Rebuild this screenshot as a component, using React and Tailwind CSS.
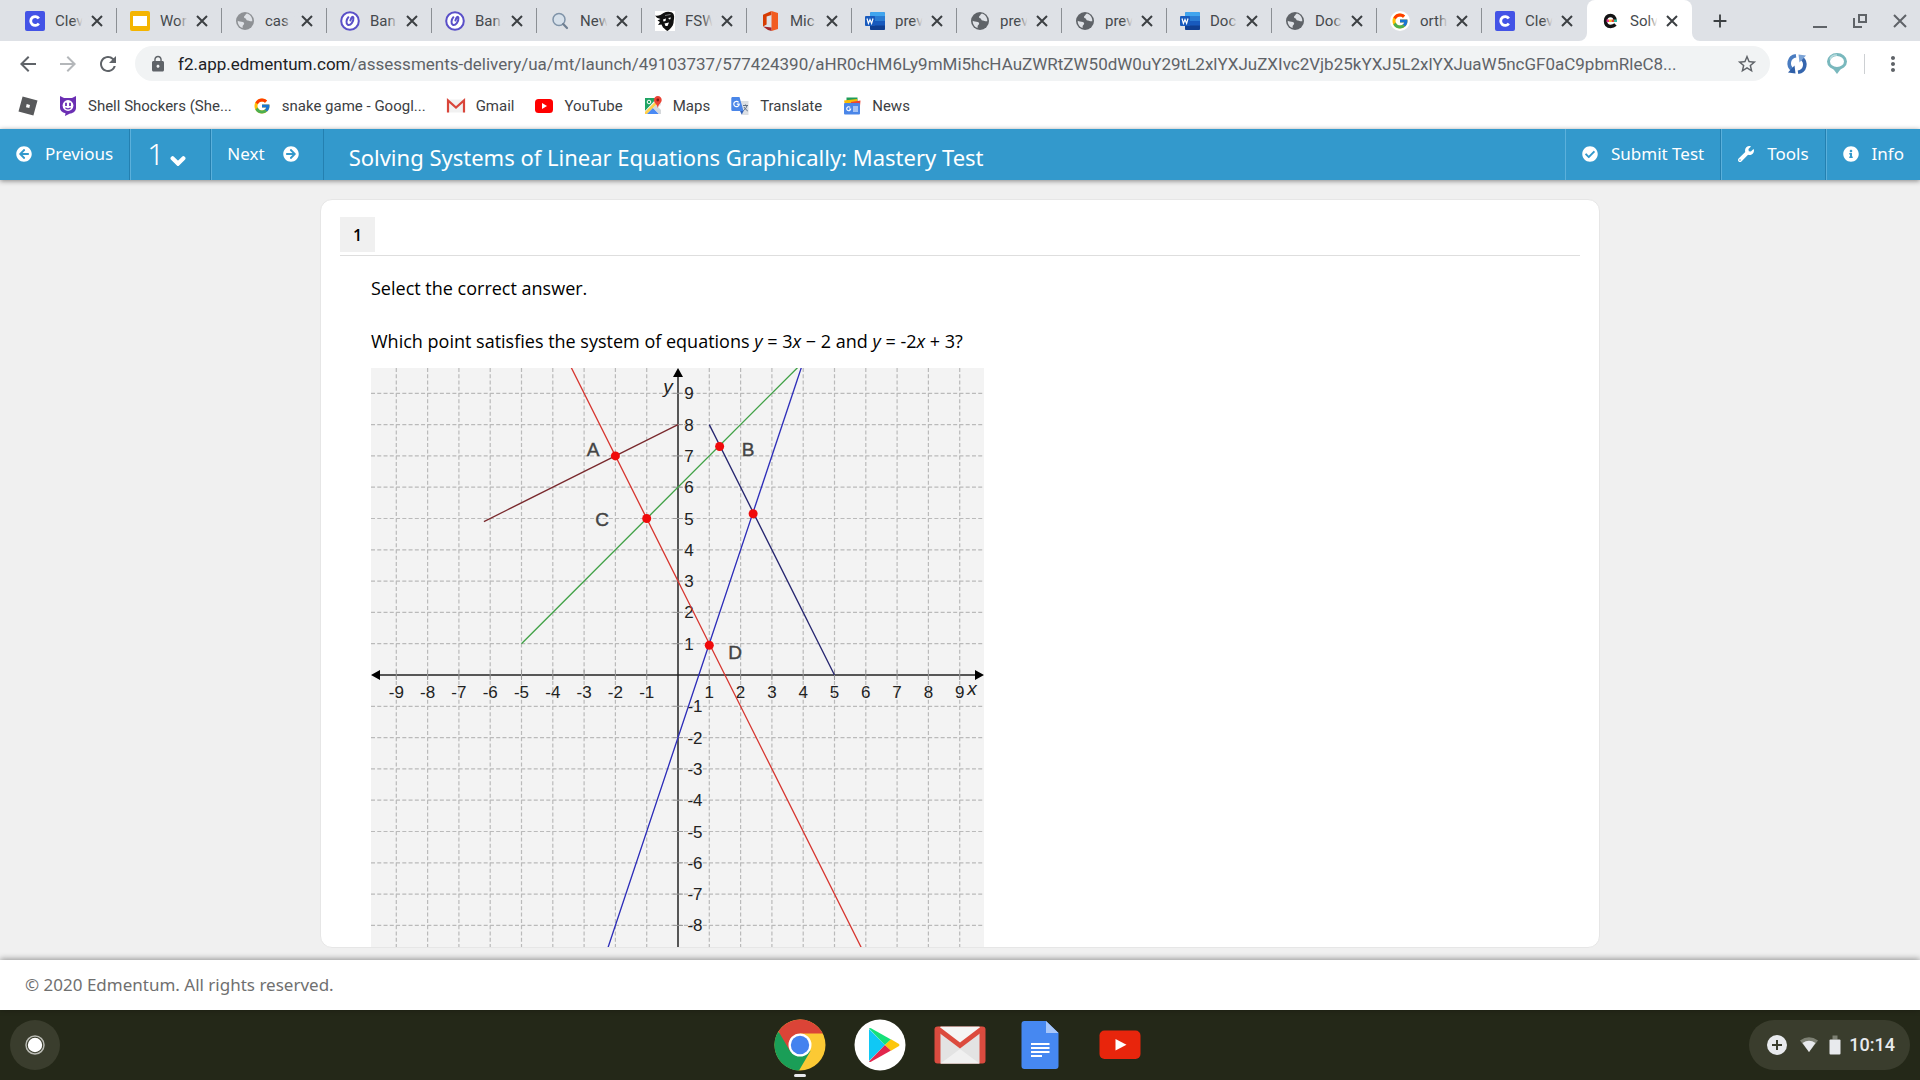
import {
    FaArrowCircleLeft,
    FaArrowCircleRight,
    FaCheckCircle,
    FaChevronDown,
    FaInfoCircle,
    FaWrench,
} from 'react-icons/fa';
import { FcGoogle } from 'react-icons/fc';
import {
    MdAdd,
    MdArrowBack,
    MdArrowForward,
    MdLock,
    MdMoreVert,
    MdRefresh,
    MdStarBorder,
} from 'react-icons/md';

// ==========================================
// Favicons
// ==========================================

function CleverIcon() {
    return (
        <svg viewBox="0 0 20 20" className="w-5 h-5">
            <rect width="20" height="20" rx="2" fill="#4353e6" />
            <path d="M13.8 7.6A4.4 4.4 0 1 0 13.8 12.4" fill="none" stroke="#fff" strokeWidth="2.8" />
        </svg>
    );
}

function SlidesIcon() {
    return (
        <svg viewBox="0 0 20 20" className="w-5 h-5">
            <rect width="20" height="20" rx="2" fill="#f4b400" />
            <rect x="3" y="5" width="14" height="10" fill="#fff" />
        </svg>
    );
}

function GlobeIcon({ light }) {
    return (
        <svg viewBox="0 0 20 20" className={light ? 'w-5 h-5 text-[#8e9195]' : 'w-5 h-5 text-[#5f6368]'}>
            <circle cx="10" cy="10" r="9" fill="currentColor" />
            <path
                d="M12 2.6C10.5 3 10.8 4.2 9.5 5C8.3 5.8 9.2 7 10.2 7.2C11.5 7.6 11 9.5 12.8 9.4C14.5 9.3 15 10.8 17.3 10.2C17.5 6.5 15 3.3 12 2.6ZM2.7 9.8C3.8 11 6 10.4 7.8 11C9.5 11.6 9.6 13.2 8.3 14C7.2 14.8 7.8 16 7.6 17C4.6 16 2.6 13.2 2.7 9.8Z"
                fill="#dee1e6"
            />
        </svg>
    );
}

function BannerIcon() {
    return (
        <svg viewBox="0 0 20 20" className="w-5 h-5" fill="none" stroke="#5a50c8" strokeLinecap="round">
            <circle cx="10" cy="10" r="8.8" fill="#fff" strokeWidth="2" />
            <path d="M8.4 6.2C6.4 8.5 5.6 12.6 7.8 13.8C10.6 14.8 13.8 10.4 13.4 6.8C13 4.6 11.4 6 10.4 9.6" strokeWidth="2" />
        </svg>
    );
}

function MagnifierIcon() {
    return (
        <svg viewBox="0 0 20 20" className="w-5 h-5" fill="none">
            <circle cx="9" cy="8.5" r="6" stroke="#7f93a8" strokeWidth="1.5" fill="#d6e0ea" />
            <path d="M13.2 13L17 17" stroke="#6f7f92" strokeWidth="2.2" strokeLinecap="round" />
        </svg>
    );
}

function PirateIcon() {
    return (
        <svg viewBox="0 0 20 20" className="w-5 h-5">
            <rect width="20" height="20" fill="#fff" />
            <path
                d="M0 4.5C3 5.5 6 4 8.5 2C12 0 17 .5 18.5 3C20 6 18.5 9 18.5 12C18 15.5 15 18 12.5 20C10.5 19 9.5 17.5 8 16.5L6.5 13.5L3 14L5 11L2.5 9.5L5.5 8L2 6.8Z"
                fill="#111"
            />
            <path d="M8 8.5L11 7.5L10.5 10L8.5 10.5ZM13 7L16 6.5L15 8.8ZM9.5 12.5L14 11.5L12.5 15L10.5 15Z" fill="#fff" />
            <path d="M10 4.5L15.5 3.5" stroke="#999" strokeWidth="0.8" />
        </svg>
    );
}

function OfficeIcon() {
    return (
        <svg viewBox="0 0 20 20" className="w-5 h-5">
            <path d="M11.5 0L3 3.8V15.5L6.6 13.6V5.6L11.5 4Z" fill="#d73b02" />
            <path d="M11.5 0L18 2V18L11.5 20Z" fill="#f25c1f" />
            <path d="M3 15.5L11.5 16.6V20L8 19Z" fill="#a4262c" />
        </svg>
    );
}

function WordIcon() {
    return (
        <svg viewBox="0 0 20 20" className="w-5 h-5">
            <rect x="5" y="1" width="15" height="18" rx="1.5" fill="#185abd" />
            <path d="M5 5.5V2.5A1.5 1.5 0 0 1 6.5 1H18.5A1.5 1.5 0 0 1 20 2.5V5.5Z" fill="#41a5ee" />
            <path d="M5 5.5H20V10H5Z" fill="#2b7cd3" />
            <path d="M5 14.5H20V17.5A1.5 1.5 0 0 1 18.5 19H6.5A1.5 1.5 0 0 1 5 17.5Z" fill="#103f91" />
            <rect y="5" width="10" height="10" rx="1" fill="#185abd" />
            <path d="M2 7.5L3.4 12.5L5 8.5L6.6 12.5L8 7.5" fill="none" stroke="#fff" strokeWidth="1.2" />
        </svg>
    );
}

function GoogleIcon({ round }) {
    return (
        <span className={round ? 'flex w-5 h-5 items-center justify-center rounded-full bg-white' : 'flex w-5 h-5 items-center justify-center'}>
            <FcGoogle className="w-[18px] h-[18px]" />
        </span>
    );
}

function EdmentumIcon() {
    return (
        <svg viewBox="0 0 20 20" className="w-5 h-5" fill="none">
            <path d="M15 9.5C15 5.8 13 4.5 10.5 4.5C7.5 4.5 5.5 6.6 5.5 10C5.5 13.5 7.5 15.5 10.6 15.5C12.5 15.5 14 15 15.5 13.6" stroke="#141414" strokeWidth="3.4" />
            <path d="M6.5 8.5H9V11H6.5Z" fill="#e5308c" />
            <path d="M9 8.5H11.5V11H9Z" fill="#f5c518" />
            <path d="M11.5 8.5H14V11H11.5Z" fill="#e2442f" />
            <path d="M14 8.5H17V11H14Z" fill="#2fb7a3" />
        </svg>
    );
}

function RobloxIcon() {
    return (
        <svg viewBox="0 0 20 20" className="w-5 h-5">
            <path d="M4.6 .5L19.5 4.5L15.4 19.5L.5 15.5ZM8.7 8L8 11.2L11.3 12L12 8.9Z" fill="#58595b" fillRule="evenodd" />
        </svg>
    );
}

function ShellIcon() {
    return (
        <svg viewBox="0 0 20 20" className="w-5 h-5">
            <path d="M2 0L6 2H14L18 0V12C18 15 15 17.5 12 17.5L7 20L7.5 17.2C4 16.5 2 14.5 2 12Z" fill="#6b2fb3" />
            <circle cx="10" cy="9.5" r="5.4" fill="#fff" />
            <path d="M8 6.8V10M12 6.8V10" stroke="#6b2fb3" strokeWidth="1.8" />
            <path d="M7.4 11.8Q10 14 12.6 11.8" stroke="#6b2fb3" strokeWidth="1.2" fill="none" />
        </svg>
    );
}

function GmailIcon() {
    return (
        <svg viewBox="0 0 20 20" className="w-5 h-5">
            <path d="M1 3.5H19V16.5H1Z" fill="#f1f1f1" />
            <path d="M2 16.5V4.5L10 11.5L18 4.5V16.5" fill="none" stroke="#d9453a" strokeWidth="2.2" />
        </svg>
    );
}

function YouTubeIcon() {
    return (
        <svg viewBox="0 0 20 20" className="w-5 h-5">
            <rect x="1" y="3" width="18" height="14" rx="3.5" fill="#f00" />
            <path d="M8 7L13 10L8 13Z" fill="#fff" />
        </svg>
    );
}

function MapsIcon() {
    return (
        <svg viewBox="0 0 20 20" className="w-5 h-5">
            <path d="M2 2H14L2 15Z" fill="#1fa463" />
            <path d="M2 15L14 3L18 7V9L7 18H2Z" fill="#e8e8e8" />
            <path d="M2 16L13 5L15 7L4 18H2Z" fill="#ffd04b" />
            <path d="M4 18L10 12L16 18Z" fill="#4a8af4" />
            <path d="M10 12L13 9L18 14V18H16Z" fill="#d5d8db" />
            <circle cx="6" cy="6" r="1.8" fill="none" stroke="#fff" />
            <path d="M14.8 0A3.9 3.9 0 0 1 18.7 4C18.7 7 15.4 8 14.8 12C14.2 8 10.9 7 10.9 4A3.9 3.9 0 0 1 14.8 0Z" fill="#ea4335" />
            <circle cx="14.8" cy="4" r="1.4" fill="#8b1a12" />
        </svg>
    );
}

function TranslateIcon() {
    return (
        <svg viewBox="0 0 20 20" className="w-5 h-5">
            <path d="M9 5H18.5V19H12Z" fill="#dcdfe3" />
            <path d="M13 9.5H18M15.5 8.5V9.5M17 9.5C16.5 12 14.5 14 13 15M14 11C15 13 16.5 14 17.8 15" stroke="#607085" strokeWidth="1" fill="none" />
            <path d="M2 1H9.5L13.5 15H2.5A1.2 1.2 0 0 1 1.3 14V2Z" fill="#4a86e8" />
            <path d="M10 15H13.5L11.8 18.8Z" fill="#2f5fb8" />
            <path d="M8.6 6.3A2.7 2.7 0 1 0 9.2 8.2H6.8" stroke="#fff" strokeWidth="1.2" fill="none" />
        </svg>
    );
}

function NewsIcon() {
    return (
        <svg viewBox="0 0 20 20" className="w-5 h-5">
            <rect x="4.5" y="1.5" width="11" height="6" fill="#1f9d58" />
            <path d="M2 4.5L15 3L16 9H3Z" fill="#fbbc04" />
            <path d="M9 6L18.5 4.5L18 10H9Z" fill="#ea4335" />
            <rect x="2" y="7" width="16" height="11.5" rx="1" fill="#4a86e8" />
            <path d="M8.2 11.4A2 2 0 1 0 8.7 13H7" stroke="#fff" strokeWidth="1.1" fill="none" />
            <path d="M11 11H16M11 13H16M11 15H16" stroke="#fff" strokeWidth="1" />
        </svg>
    );
}

// ==========================================
// Browser chrome
// ==========================================

const tabs = [
    { title: 'Clev', icon: <CleverIcon /> },
    { title: 'Wor', icon: <SlidesIcon /> },
    { title: 'cas', icon: <GlobeIcon light /> },
    { title: 'Ban', icon: <BannerIcon /> },
    { title: 'Ban', icon: <BannerIcon /> },
    { title: 'New', icon: <MagnifierIcon /> },
    { title: 'FSW', icon: <PirateIcon /> },
    { title: 'Mic', icon: <OfficeIcon /> },
    { title: 'prev', icon: <WordIcon /> },
    { title: 'prev', icon: <GlobeIcon /> },
    { title: 'prev', icon: <GlobeIcon /> },
    { title: 'Doc', icon: <WordIcon /> },
    { title: 'Doc', icon: <GlobeIcon /> },
    { title: 'orth', icon: <GoogleIcon round /> },
    { title: 'Clev', icon: <CleverIcon /> },
    { title: 'Solv', icon: <EdmentumIcon />, active: true },
];

const bookmarks = [
    { title: '', icon: <RobloxIcon /> },
    { title: 'Shell Shockers (She...', icon: <ShellIcon /> },
    { title: 'snake game - Googl...', icon: <GoogleIcon /> },
    { title: 'Gmail', icon: <GmailIcon /> },
    { title: 'YouTube', icon: <YouTubeIcon /> },
    { title: 'Maps', icon: <MapsIcon /> },
    { title: 'Translate', icon: <TranslateIcon /> },
    { title: 'News', icon: <NewsIcon /> },
];

function Tab({ tab, divider }) {
    return (
        <div
            className={`relative flex flex-1 max-w-[105px] items-center pl-[13px] ${tab.active ? 'bg-white rounded-t-lg' : ''}`}
        >
            {tab.active && (
                <svg viewBox="0 0 121 8" className="absolute -left-2 bottom-0 h-2 w-[121px]" fill="#fff">
                    <path d="M8 0V8H0A8 8 0 0 0 8 0ZM113 0V8H121A8 8 0 0 1 113 0Z" />
                </svg>
            )}
            <span className="shrink-0">{tab.icon}</span>
            <span className="relative ml-[10px] w-[34px] whitespace-nowrap text-[15px] leading-5 text-[#45494d]">
                {tab.title}
                <span
                    className={`absolute inset-y-0 right-0 w-4 bg-linear-to-r from-transparent ${tab.active ? 'to-white to-60%' : 'to-[#dee1e6] to-60%'}`}
                />
            </span>
            <button aria-label={`Close ${tab.title}`} className="shrink-0 text-[#3c4043]">
                <svg viewBox="0 0 16 16" className="w-4 h-4" stroke="currentColor" strokeWidth="2">
                    <path d="M3 3L13 13M13 3L3 13" />
                </svg>
            </button>
            {divider && <span className="absolute right-0 top-2 h-[25px] w-px bg-[#8b8f94]" />}
        </div>
    );
}

function TabStrip() {
    return (
        <div className="flex h-[41px] bg-[#dee1e6] pl-3">
            <div className="flex flex-1">
                {tabs.map((tab, index) => (
                    <Tab key={index} tab={tab} divider={index < tabs.length - 2} />
                ))}
                <button aria-label="New tab" className="ml-[17px] text-[#3c4043]">
                    <MdAdd className="w-[22px] h-[22px]" />
                </button>
            </div>
            <div className="flex items-center gap-6 pr-3 text-[#5f6368]">
                <button aria-label="Minimize">
                    <svg viewBox="0 0 16 16" className="w-4 h-4">
                        <path d="M1 14H15" stroke="currentColor" strokeWidth="2" />
                    </svg>
                </button>
                <button aria-label="Restore">
                    <svg viewBox="0 0 16 16" className="w-4 h-4" fill="none" stroke="currentColor" strokeWidth="2">
                        <path d="M7 2H14V9H7ZM2 5V14H10" />
                    </svg>
                </button>
                <button aria-label="Close window">
                    <svg viewBox="0 0 16 16" className="w-4 h-4" stroke="currentColor" strokeWidth="2">
                        <path d="M2 2L14 14M14 2L2 14" />
                    </svg>
                </button>
            </div>
        </div>
    );
}

function Toolbar() {
    return (
        <div className="flex h-[45px] items-center bg-white pl-4 pr-[15px] text-[#5f6368]">
            <button aria-label="Back">
                <MdArrowBack className="w-6 h-6" />
            </button>
            <button aria-label="Forward" className="ml-4 text-[#b4b7ba]">
                <MdArrowForward className="w-6 h-6" />
            </button>
            <button aria-label="Reload" className="ml-4">
                <MdRefresh className="w-6 h-6" />
            </button>

            <div className="ml-[15px] flex h-[35px] min-w-0 flex-1 items-center rounded-full bg-[#f1f3f4] pl-[14px] pr-3">
                <MdLock className="w-[18px] h-[18px] shrink-0" />
                <p className="ml-[11px] min-w-0 flex-1 truncate text-[17px] leading-6">
                    <span className="text-[#202124]">f2.app.edmentum.com</span>
                    /assessments-delivery/ua/mt/launch/49103737/577424390/aHR0cHM6Ly9mMi5hcHAuZWRtZW50dW0uY29tL2xlYXJuZXIvc2Vjb25kYXJ5L2xlYXJuaW5ncGF0aC9pbmRleC8...
                </p>
                <button aria-label="Bookmark this page" className="ml-4">
                    <MdStarBorder className="w-[22px] h-[22px]" />
                </button>
            </div>

            <button aria-label="Sync" className="ml-4">
                <svg viewBox="0 0 22 22" className="w-[22px] h-[22px]" fill="none" strokeWidth="3.6">
                    <path d="M10 2.8C2.5 4 1 12.5 6.5 17" stroke="#4a7cc0" />
                    <path d="M12 19.2C19.5 18 21 9.5 15.5 5" stroke="#3566ae" />
                    <path d="M2 19.5L9.5 20.5L8.5 12.5Z" fill="#2f5fa8" />
                    <path d="M20 2.5L12.5 1.5L13.5 9.5Z" fill="#7ba3d6" />
                </svg>
            </button>
            <button aria-label="Location helper" className="ml-[18px]">
                <svg viewBox="0 0 22 22" className="w-[22px] h-[22px]">
                    <path d="M11 21L5 13H17Z" fill="#79b8bd" />
                    <ellipse cx="11" cy="8.5" rx="8.5" ry="7" fill="#fff" stroke="#79b8bd" strokeWidth="3" />
                    <path d="M4 6.5A7 5.5 0 0 1 11 2" fill="none" stroke="#b8dcdf" strokeWidth="1.5" />
                </svg>
            </button>
            <span className="ml-4 h-5 w-px bg-[#cdd0d3]" />
            <button aria-label="Menu" className="ml-4">
                <MdMoreVert className="w-6 h-6" />
            </button>
        </div>
    );
}

function BookmarksBar() {
    return (
        <div className="flex h-[43px] items-center gap-5 bg-white pl-[18px] pb-[3px] text-[15px] leading-5 text-[#3c4043]">
            {bookmarks.map((bookmark, index) => (
                <a key={index} href="#" aria-label={bookmark.title || 'Roblox'} className="flex items-center gap-[10px]">
                    {bookmark.icon}
                    {bookmark.title && <span>{bookmark.title}</span>}
                </a>
            ))}
        </div>
    );
}

// ==========================================
// Test header
// ==========================================

function TestHeader() {
    return (
        <header className="relative z-10 flex h-[51px] shrink-0 bg-[#3399cc] font-['Noto_Sans','Open_Sans',sans-serif] text-[17px] leading-6 text-white shadow-[0_1px_5px_rgba(0,0,0,0.45)]">
            <button className="flex items-center gap-[13px] border-r border-[#2480b0] px-4 pb-[2px]">
                <FaArrowCircleLeft className="w-4 h-4" />
                Previous
            </button>
            <button aria-label="Question 1" className="flex items-center gap-[6px] border-l border-[#5bb0db] border-r border-r-[#2480b0] pl-4 pr-6 pb-[2px] text-[30px] font-light">
                1
                <FaChevronDown strokeWidth="50" className="mt-[14px] w-4 h-4" />
            </button>
            <button className="flex items-center gap-[18px] border-l border-[#5bb0db] border-r border-r-[#2480b0] pl-[15px] pr-6 pb-[2px]">
                Next
                <FaArrowCircleRight className="w-4 h-4" />
            </button>

            <h1 className="flex flex-1 items-center pt-1 pl-[25px] text-[22px]">
                Solving Systems of Linear Equations Graphically: Mastery Test
            </h1>

            <button className="flex items-center gap-[13px] border-l border-[#5bb0db] border-r border-r-[#2480b0] px-4 pb-[2px]">
                <FaCheckCircle className="w-4 h-4" />
                Submit Test
            </button>
            <button className="flex items-center gap-[13px] border-l border-[#5bb0db] border-r border-r-[#2480b0] px-4 pb-[2px]">
                <FaWrench className="w-4 h-4" />
                Tools
            </button>
            <button className="flex items-center gap-[13px] border-l border-[#5bb0db] px-4 pb-[2px]">
                <FaInfoCircle className="w-4 h-4" />
                Info
            </button>
        </header>
    );
}

// ==========================================
// Graph
// ==========================================

const UNIT = 31.3;
const px = (x) => 307 + x * UNIT;
const py = (y) => 307 - y * UNIT;
const ticks = [-9, -8, -7, -6, -5, -4, -3, -2, -1, 1, 2, 3, 4, 5, 6, 7, 8, 9];

const lines = [
    { from: [-3.45, 9.9], to: [6.45, -9.9], color: '#d6322c' },
    { from: [-2.65, -9.95], to: [3.96, 9.88], color: '#2a2ab8' },
    { from: [-5, 1], to: [3.85, 9.85], color: '#3fa045' },
    { from: [-6.2, 4.9], to: [0, 8], color: '#7a2a2e' },
    { from: [1, 8], to: [5, 0], color: '#24246e' },
];

const points = [
    [-2, 7],
    [1.33, 7.3],
    [2.4, 5.15],
    [-1, 5],
    [1, 0.95],
];

const pointLabels = [
    { text: 'A', x: 222, y: 88 },
    { text: 'B', x: 377, y: 88 },
    { text: 'C', x: 231, y: 158 },
    { text: 'D', x: 364, y: 291 },
];

function Graph() {
    return (
        <svg
            viewBox="0 0 613 613"
            className="mt-[15px] block w-[613px] shrink-0 bg-[#f3f3f3] font-['Liberation_Sans',sans-serif]"
            role="img"
            aria-label="Coordinate plane with five lines and labeled intersection points"
        >
            {/* Grid */}
            <g stroke="#bababa" strokeWidth="1.2" strokeDasharray="4 2.26">
                {ticks.map((tick) => (
                    <g key={tick}>
                        <line x1={px(tick)} y1="0" x2={px(tick)} y2="613" />
                        <line x1="0" y1={py(tick)} x2="613" y2={py(tick)} />
                    </g>
                ))}
            </g>

            {/* Axes */}
            <g stroke="#222" strokeWidth="1.5">
                <line x1="307" y1="4" x2="307" y2="609" />
                <line x1="4" y1="307" x2="609" y2="307" />
            </g>
            <g stroke="#999" strokeWidth="1">
                {ticks.map((tick) => (
                    <g key={tick}>
                        <line x1={px(tick)} y1="302" x2={px(tick)} y2="312" />
                        <line x1="302" y1={py(tick)} x2="312" y2={py(tick)} />
                    </g>
                ))}
            </g>
            <path d="M307 0L302 9H312ZM0 307L9 302V312ZM613 307L604 302V312ZM307 613L302 604H312Z" fill="#000" />

            {/* Axis numbers */}
            <g fontSize="17" fill="#222" textAnchor="middle">
                {ticks.map((tick) => (
                    <text key={tick} x={px(tick)} y="330">{tick}</text>
                ))}
                {ticks.slice(1).map((tick) => (
                    <text key={tick} x={tick < 0 ? 324 : 318} y={py(tick) + 6}>{tick}</text>
                ))}
            </g>
            <g fontSize="19" fontStyle="italic" fill="#222" textAnchor="middle">
                <text x="297" y="25">y</text>
                <text x="601" y="327">x</text>
            </g>

            {/* Lines and points */}
            {lines.map((line) => (
                <line
                    key={line.color}
                    x1={px(line.from[0])}
                    y1={py(line.from[1])}
                    x2={px(line.to[0])}
                    y2={py(line.to[1])}
                    stroke={line.color}
                    strokeWidth="1.3"
                />
            ))}
            {points.map(([x, y]) => (
                <circle key={`${x},${y}`} cx={px(x)} cy={py(y)} r="4.5" fill="#f00a0a" />
            ))}
            <g fontSize="19" fill="#444" stroke="#444" strokeWidth="0.4" textAnchor="middle">
                {pointLabels.map((label) => (
                    <text key={label.text} x={label.x} y={label.y}>{label.text}</text>
                ))}
            </g>
        </svg>
    );
}

function Question() {
    return (
        <main className="flex min-h-0 flex-1 justify-center bg-[#f0f0f0] pt-[19px] pb-3">
            <section className="flex w-2/3 flex-col overflow-hidden rounded-xl border border-[#e6e6e6] bg-white px-[19px] pt-[17px]">
                <div className="border-b border-[#dedede] pb-[3px]">
                    <h2 className="flex h-[35px] w-[35px] items-center justify-center bg-[#f0f0f0] text-base font-semibold leading-6 text-black">
                        1
                    </h2>
                </div>
                <div className="min-h-0 pl-[31px] pt-5 text-lg leading-6 text-black">
                    <p>Select the correct answer.</p>
                    <p className="mt-[29px]">
                        Which point satisfies the system of equations <i>y</i> = 3<i>x</i> − 2 and <i>y</i> = -2<i>x</i> + 3?
                    </p>
                    <Graph />
                </div>
            </section>
        </main>
    );
}

// ==========================================
// Shelf
// ==========================================

function ChromeApp() {
    return (
        <svg viewBox="0 0 52 52" className="w-[52px] h-[52px]">
            <circle cx="26" cy="26" r="25.5" fill="#fcc934" />
            <path d="M26 26L4 13A25.5 25.5 0 0 0 25 51.5L36.5 32Z" fill="#1a9e57" />
            <path d="M26 14.5H48.8A25.5 25.5 0 0 0 4.5 12.5L16 32Z" fill="#db4437" />
            <circle cx="26" cy="26" r="11.5" fill="#fff" />
            <circle cx="26" cy="26" r="9.2" fill="#4482ef" />
        </svg>
    );
}

function PlayApp() {
    return (
        <svg viewBox="0 0 52 52" className="w-[52px] h-[52px]">
            <circle cx="26" cy="26" r="25.5" fill="#fff" />
            <path d="M15 10L31 26L15 42Z" fill="#10c8f5" />
            <path d="M15 9.5Q15.5 8.5 17 9.2L37 20.5L31 26Z" fill="#15e07a" />
            <path d="M15 42.5Q15.5 43.5 17 42.8L37 31.5L31 26Z" fill="#e2264d" />
            <path d="M37 20.3L45 25Q46 26 45 27L37 31.7L31 26Z" fill="#fdc60a" />
        </svg>
    );
}

function GmailApp() {
    return (
        <svg viewBox="0 0 52 52" className="w-[52px] h-[52px]">
            <rect x="0.5" y="7.5" width="51" height="37" rx="3" fill="#d94b3f" />
            <path d="M6.5 7.5H45.5V44.5H6.5Z" fill="#e3e3e3" />
            <path d="M6.5 44.5L26 30L45.5 44.5Z" fill="#f0f0f0" />
            <path d="M4 8H48L26 24.5Z" fill="#f5f5f5" />
            <path d="M1.5 11L26 29.5L50.5 11L47 7.5L26 23.5L5 7.5Z" fill="#dc4b3e" />
        </svg>
    );
}

function DocsApp() {
    return (
        <svg viewBox="0 0 52 52" className="w-[52px] h-[52px]">
            <path d="M10.5 2H32L44.5 14V47A3 3 0 0 1 41.5 50H10.5A3 3 0 0 1 7.5 47V5A3 3 0 0 1 10.5 2Z" fill="#4688f1" />
            <path d="M32 2L44.5 14H32Z" fill="#a8c7fa" />
            <path d="M17 25H35.5M17 29H35.5M17 33H35.5M17 37H28" stroke="#fff" strokeWidth="2" />
        </svg>
    );
}

function YouTubeApp() {
    return (
        <svg viewBox="0 0 52 52" className="w-[52px] h-[52px]">
            <rect x="5.5" y="11.5" width="41" height="28.5" rx="5" fill="#e8250c" />
            <path d="M21.5 20L32.5 25.7L21.5 31.5Z" fill="#fff" />
        </svg>
    );
}

const apps = [
    { name: 'Chrome', icon: <ChromeApp />, running: true },
    { name: 'Play Store', icon: <PlayApp /> },
    { name: 'Gmail', icon: <GmailApp /> },
    { name: 'Docs', icon: <DocsApp /> },
    { name: 'YouTube', icon: <YouTubeApp /> },
];

function Shelf() {
    return (
        <div className="grid h-[70px] shrink-0 grid-cols-[1fr_auto_1fr] items-center bg-[#242818] px-[10px]">
            <button aria-label="Launcher" className="flex h-[50px] w-[50px] items-center justify-center rounded-full bg-[#3a3d2d]">
                <svg viewBox="0 0 20 20" className="w-5 h-5">
                    <circle cx="10" cy="10" r="9" fill="none" stroke="#b9bab3" strokeWidth="1.5" />
                    <circle cx="10" cy="10" r="7.2" fill="#fff" />
                </svg>
            </button>

            <div className="flex gap-7">
                {apps.map((app) => (
                    <button key={app.name} aria-label={app.name} className="relative">
                        {app.icon}
                        {app.running && (
                            <span className="absolute -bottom-[6px] left-1/2 h-[3px] w-3 -translate-x-1/2 rounded-full bg-[#e8eaed]" />
                        )}
                    </button>
                ))}
            </div>

            <button className="flex h-[50px] items-center justify-self-end rounded-full bg-[#3a3d2d] pl-[18px] pr-[15px] text-lg font-medium leading-6 text-[#e8eaed]">
                <svg viewBox="0 0 20 20" className="w-5 h-5">
                    <circle cx="10" cy="10" r="10" fill="#e8eaed" />
                    <path d="M10 5V15M5 10H15" stroke="#3a3d2d" strokeWidth="2" />
                </svg>
                <svg viewBox="0 0 20 20" className="ml-3 w-5 h-5">
                    <path d="M1 5.5Q10 -1 19 5.5L10 17Z" fill="#7d8073" />
                    <path d="M3.5 8Q10 3.5 16.5 8L10 17Z" fill="#e8eaed" />
                </svg>
                <svg viewBox="0 0 12 20" className="ml-[10px] h-5 w-3">
                    <rect x="3.5" y="0.5" width="5" height="4" fill="#7d8073" />
                    <rect x="0.5" y="4.5" width="11" height="15" rx="1" fill="#e8eaed" />
                </svg>
                <span className="ml-2">10:14</span>
            </button>
        </div>
    );
}

export default function App() {
    return (
        <div className="flex h-screen flex-col overflow-hidden bg-white font-[Roboto,sans-serif]">
            <div className="shrink-0">
                <TabStrip />
                <Toolbar />
                <BookmarksBar />
            </div>

            <div className="flex min-h-0 flex-1 flex-col font-['Open_Sans','Noto_Sans',sans-serif]">
                <TestHeader />
                <Question />
                <footer className="relative flex h-[50px] shrink-0 items-center bg-white px-[25px] font-['Noto_Sans','Open_Sans',sans-serif] text-[17px] leading-6 text-[#707070] shadow-[0_-1px_6px_rgba(0,0,0,0.4)]">
                    © 2020 Edmentum. All rights reserved.
                </footer>
            </div>

            <Shelf />
        </div>
    );
}
